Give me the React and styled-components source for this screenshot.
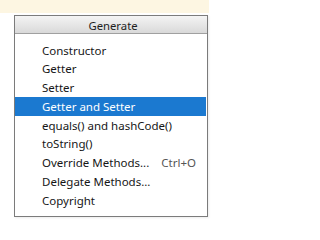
import styled, { createGlobalStyle } from "styled-components";

const GlobalStyle = createGlobalStyle`
  html, body {
    margin: 0;
    padding: 0;
    background: #fff;
  }
`;

const items = [
  { label: "Constructor" },
  { label: "Getter" },
  { label: "Setter" },
  { label: "Getter and Setter", active: true },
  { label: "equals() and hashCode()" },
  { label: "toString()" },
  { label: "Override Methods...", shortcut: "Ctrl+O" },
  { label: "Delegate Methods..." },
  { label: "Copyright" },
];

export default function App() {
  return (
    <Page>
      <GlobalStyle />
      <TopStrip />
      <Menu>
        <MenuHeader>Generate</MenuHeader>
        <MenuList>
          {items.map((item) => (
            <MenuItem key={item.label} $active={item.active}>
              <span>{item.label}</span>
              {item.shortcut && <Shortcut>{item.shortcut}</Shortcut>}
            </MenuItem>
          ))}
        </MenuList>
      </Menu>
    </Page>
  );
}

const Page = styled.div`
  width: 221px;
  height: 233px;
  font-family: "Noto Sans", "Open Sans", sans-serif;
`;

const TopStrip = styled.div`
  width: 209px;
  height: 13px;
  background: #fdf6e2;
`;

const Menu = styled.div`
  width: 194px;
  height: 202px;
  margin: 2px 0 0 14px;
  box-sizing: border-box;
  border: 1px solid #7b7b7b;
  background: #fff;
  box-shadow: 1px 1px 2px rgba(0, 0, 0, 0.08);
  display: flex;
  flex-direction: column;
`;

const MenuHeader = styled.div`
  height: 18px;
  box-sizing: border-box;
  border-bottom: 1px solid #a0a0a0;
  background: linear-gradient(#f4f4f4, #d9d9d9);
  display: flex;
  align-items: center;
  justify-content: center;
  padding: 2px 0 0 4px;
  font-size: 11.3px;
  color: #1e1e1e;
`;

const MenuList = styled.ul`
  list-style: none;
  margin: 0;
  padding: 6.75px 1px 0 0;
`;

const MenuItem = styled.li`
  height: 18.75px;
  display: flex;
  align-items: center;
  justify-content: space-between;
  padding: 0 10px 0 27px;
  font-size: 11.5px;
  color: ${(p) => (p.$active ? "#fff" : "#161616")};
  background: ${(p) => (p.$active ? "#1b79d0" : "transparent")};
`;

const Shortcut = styled.span`
  color: #555;
`;
